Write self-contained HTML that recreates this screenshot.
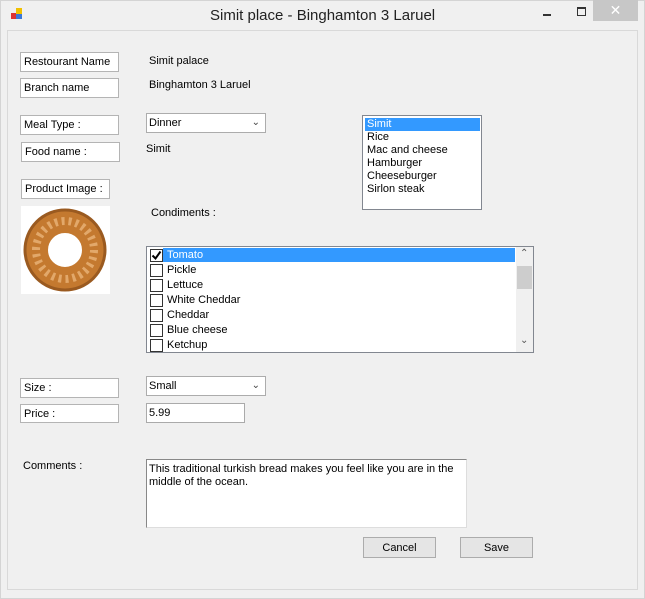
<!DOCTYPE html>
<html><head><style>
body{margin:0;width:645px;height:599px;background:#f0f0f0;position:relative;overflow:hidden;font-family:"Liberation Sans",sans-serif;font-size:11px;color:#000}
div,span{position:absolute;box-sizing:border-box}
.t{white-space:nowrap}
.lb{background:#fff;border:1px solid #b4b4b4;padding:3px 0 0 3px;white-space:nowrap}
.cb{background:#fff;border:1px solid #acacac;padding:3px 0 0 2px}
.cb i{position:absolute;right:5px;top:3px;font-style:normal;font-size:10px;color:#444}
.btn{background:#e5e5e5;border:1px solid #acacac;text-align:center;padding-top:4px}
.chk{width:13px;height:13px;border:1px solid #333;background:#fff;left:3px}
</style></head><body>
<div style="left:0;top:0;width:645px;height:599px;border:1px solid #d4d4d4"></div>
<div style="left:11px;top:8px;width:12px;height:12px"><svg width="12" height="12"><rect x="0" y="5" width="5" height="6" fill="#d33"/><rect x="5" y="0" width="6" height="6" fill="#f0c000"/><rect x="5" y="6" width="6" height="5" fill="#3a78d8"/></svg></div>
<div class="t" style="left:210px;top:7px;font-size:15px;color:#222">Simit place - Binghamton 3 Laruel</div>
<div style="left:543px;top:14px;width:8px;height:2px;background:#333"></div>
<div style="left:577px;top:7px;width:9px;height:9px;border:1px solid #333;border-top-width:2px"></div>
<div style="left:593px;top:0;width:45px;height:21px;background:#c7c7c7;color:#fff;text-align:center;font-size:14px;padding-top:2px">✕</div>
<div style="left:7px;top:30px;width:631px;height:560px;border:1px solid #d9d9d9"></div>

<div class="lb" style="left:20px;top:52px;width:99px;height:20px">Restourant Name</div>
<div class="lb" style="left:20px;top:78px;width:99px;height:20px">Branch name</div>
<div class="t" style="left:149px;top:55px">Simit palace</div>
<div class="t" style="left:149px;top:79px">Binghamton 3 Laruel</div>

<div class="lb" style="left:20px;top:115px;width:99px;height:20px">Meal Type :</div>
<div class="lb" style="left:21px;top:142px;width:99px;height:20px">Food name :</div>
<div class="lb" style="left:21px;top:179px;width:89px;height:20px">Product Image :</div>
<div style="left:21px;top:206px;width:89px;height:88px;background:#fff">
<svg width="89" height="88"><circle cx="44" cy="44" r="29" fill="none" stroke="#c4792f" stroke-width="24"/><circle cx="44" cy="44" r="29" fill="none" stroke="#e2a86a" stroke-width="8" stroke-dasharray="3 4"/><circle cx="44" cy="44" r="40" fill="none" stroke="#9a5a20" stroke-width="3"/></svg></div>

<div class="cb" style="left:146px;top:113px;width:120px;height:20px">Dinner<i>⌄</i></div>
<div class="t" style="left:146px;top:143px">Simit</div>

<div style="left:362px;top:115px;width:120px;height:95px;background:#fff;border:1px solid #828790;line-height:13px">
<div style="left:2px;top:2px;width:115px;height:13px;background:#3399ff;color:#fff;padding-left:2px">Simit</div>
<div class="t" style="left:4px;top:15px">Rice<br>Mac and cheese<br>Hamburger<br>Cheeseburger<br>Sirlon steak</div>
</div>

<div class="t" style="left:151px;top:207px">Condiments :</div>

<div style="left:146px;top:246px;width:388px;height:107px;background:#fff;border:1px solid #828790">
<div style="left:16px;top:1px;width:352px;height:14px;background:#3399ff"></div>
<div class="chk" style="top:2px"><svg width="11" height="11" style="position:absolute;left:0;top:0"><path d="M1.5 5.5l3 3 5-7" stroke="#000" stroke-width="2" fill="none"/></svg></div>
<div class="chk" style="top:17px"></div><div class="chk" style="top:32px"></div><div class="chk" style="top:47px"></div><div class="chk" style="top:62px"></div><div class="chk" style="top:77px"></div><div class="chk" style="top:92px"></div>
<div class="t" style="left:20px;top:1px;line-height:15px"><span style="position:static;color:#fff">Tomato</span><br>Pickle<br>Lettuce<br>White Cheddar<br>Cheddar<br>Blue cheese<br>Ketchup</div>
<div style="left:369px;top:0;width:17px;height:105px;background:#f0f0f0"></div>
<div style="left:370px;top:19px;width:15px;height:23px;background:#cdcdcd"></div>
<div class="t" style="left:373px;top:1px;font-size:10px;color:#555">⌃</div>
<div class="t" style="left:373px;top:88px;font-size:10px;color:#555">⌄</div>
</div>

<div class="lb" style="left:20px;top:378px;width:99px;height:20px">Size :</div>
<div class="cb" style="left:146px;top:376px;width:120px;height:20px">Small<i>⌄</i></div>
<div class="lb" style="left:20px;top:404px;width:99px;height:19px">Price :</div>
<div class="cb" style="left:146px;top:403px;width:99px;height:20px;border-color:#aaa">5.99</div>

<div class="t" style="left:23px;top:460px">Comments :</div>
<div style="left:146px;top:459px;width:321px;height:69px;background:#fff;border:1px solid #888;border-right-color:#ddd;border-bottom-color:#ddd;padding:3px 2px;line-height:13px">This traditional turkish bread makes you feel like you are in the middle of the ocean.</div>

<div class="btn" style="left:363px;top:537px;width:73px;height:21px">Cancel</div>
<div class="btn" style="left:460px;top:537px;width:73px;height:21px">Save</div>
</body></html>
